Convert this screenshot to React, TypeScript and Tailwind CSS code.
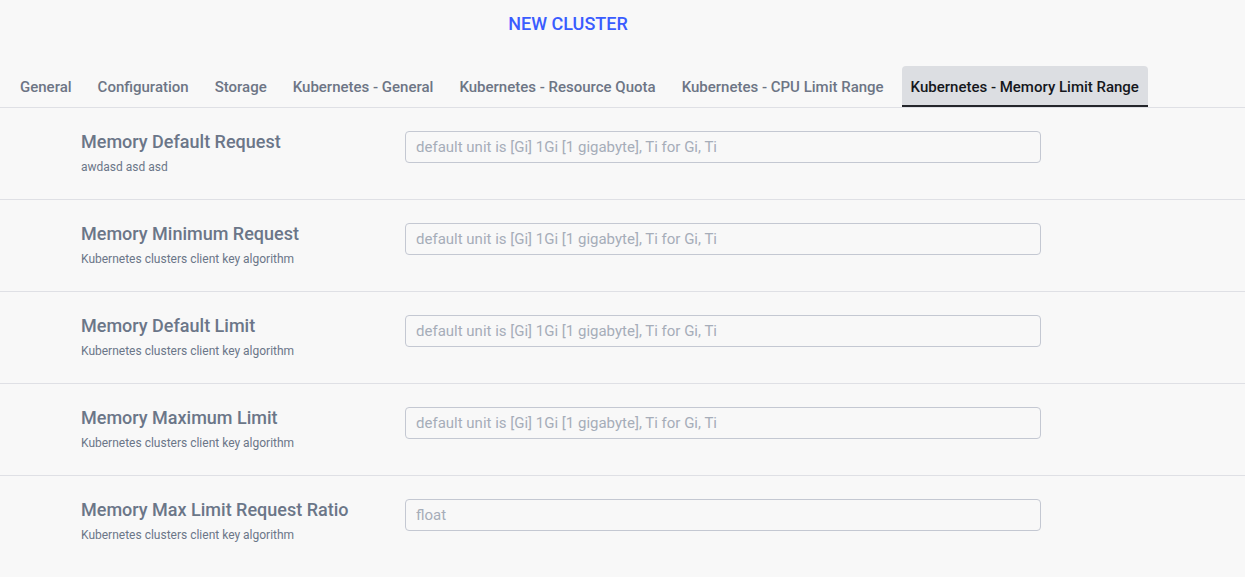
import React from "react";

const tabs = [
  "General",
  "Configuration",
  "Storage",
  "Kubernetes - General",
  "Kubernetes - Resource Quota",
  "Kubernetes - CPU Limit Range",
  "Kubernetes - Memory Limit Range",
];

const rows = [
  { title: "Memory Default Request", sub: "awdasd asd asd", ph: "default unit is [Gi] 1Gi [1 gigabyte], Ti for Gi, Ti" },
  { title: "Memory Minimum Request", sub: "Kubernetes clusters client key algorithm", ph: "default unit is [Gi] 1Gi [1 gigabyte], Ti for Gi, Ti" },
  { title: "Memory Default Limit", sub: "Kubernetes clusters client key algorithm", ph: "default unit is [Gi] 1Gi [1 gigabyte], Ti for Gi, Ti" },
  { title: "Memory Maximum Limit", sub: "Kubernetes clusters client key algorithm", ph: "default unit is [Gi] 1Gi [1 gigabyte], Ti for Gi, Ti" },
  { title: "Memory Max Limit Request Ratio", sub: "Kubernetes clusters client key algorithm", ph: "float" },
];

export default function App() {
  return (
    <div
      className="min-h-[577px] w-full bg-[#f8f8f8]"
      style={{ fontFamily: "Roboto, 'Liberation Sans', sans-serif" }}
    >
      <div className="w-[1136px] pt-[13px] text-center">
        <h1 className="text-[18px] leading-[22px] font-medium text-[#3a5cff]">NEW CLUSTER</h1>
      </div>
      <nav className="mt-[31px] flex gap-[10px] border-b border-[#dfe0e5] pl-[12px]">
        {tabs.map((t, i) => {
          const active = i === tabs.length - 1;
          return (
            <div
              key={t}
              className={
                active
                  ? "flex h-[41px] items-center rounded-t-[4px] border-b-2 border-[#24262b] bg-[#dcdee2] px-[9px] pt-[4px] text-[15px] font-medium text-[#15171c]"
                  : "flex h-[41px] items-center border-b-2 border-transparent px-2 pt-[4px] text-[15px] font-medium text-[#6d7585]"
              }
            >
              {t}
            </div>
          );
        })}
      </nav>
      <div>
        {rows.map((r, i) => (
          <div
            key={r.title}
            className={
              i === rows.length - 1
                ? "flex py-6 pl-[81px]"
                : "flex border-b border-[#dfe0e5] py-6 pl-[81px]"
            }
          >
            <div className="w-[324px]">
              <div className="text-[18px] leading-5 font-medium text-[#6b7688]">{r.title}</div>
              <div className="mt-[7px] text-[12px] leading-4 text-[#6b7688]">{r.sub}</div>
            </div>
            <input
              className="-mt-px h-[32px] w-[636px] rounded-[4px] border border-[#c4c8d2] bg-[#f8f8f8] px-[10px] text-[15px] text-[#374151] placeholder:text-[#a6adb9] outline-none"
              placeholder={r.ph}
            />
          </div>
        ))}
      </div>
    </div>
  );
}
